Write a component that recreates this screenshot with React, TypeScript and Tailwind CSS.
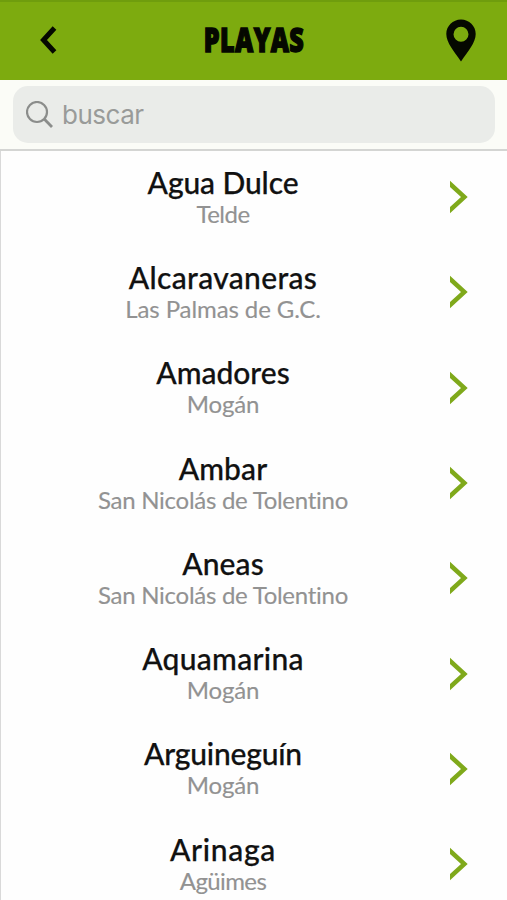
const beaches = [
  { name: "Agua Dulce", town: "Telde", nameSpacing: "tracking-[-0.1px]", townSpacing: "tracking-[-0.5px]" },
  { name: "Alcaravaneras", town: "Las Palmas de G.C.", nameSpacing: "tracking-[0.35px]", townSpacing: "tracking-[-0.1px]" },
  { name: "Amadores", town: "Mogán", nameSpacing: "tracking-[0px]", townSpacing: "tracking-[-0.2px]" },
  { name: "Ambar", town: "San Nicolás de Tolentino", nameSpacing: "tracking-[0.1px]", townSpacing: "tracking-[-0.27px]" },
  { name: "Aneas", town: "San Nicolás de Tolentino", nameSpacing: "tracking-[0.1px]", townSpacing: "tracking-[-0.27px]" },
  { name: "Aquamarina", town: "Mogán", nameSpacing: "tracking-[0.3px]", townSpacing: "tracking-[-0.2px]" },
  { name: "Arguineguín", town: "Mogán", nameSpacing: "tracking-[-0.2px]", townSpacing: "tracking-[-0.2px]" },
  { name: "Arinaga", town: "Agüimes", nameSpacing: "tracking-[0.7px]", townSpacing: "tracking-[-0.6px]" },
];

function Header() {
  return (
    <header className="flex h-20 shrink-0 items-center border-t-2 border-[#6f9d0d] bg-[#7dab0f] pr-[31px] pl-[39px]">
      <button aria-label="Volver" className="w-[30px] pb-0.5">
        <svg width="18" height="30" viewBox="0 0 18 30" fill="none" stroke="#050800" strokeWidth="5">
          <path d="M15.500 3 4.500 15l11 12" />
        </svg>
      </button>
      <h1 className="ml-[70px] flex w-[230px] scale-x-[0.76] justify-center pb-[3px] font-['Open_Sans',sans-serif] text-[33px] leading-none font-extrabold tracking-[0.5px] whitespace-nowrap text-[#050800] [-webkit-text-stroke:1.5px_#050800]">
        PLAYAS
      </h1>
      <button aria-label="Mapa" className="ml-auto pb-[1px]">
        <svg width="30" height="43" viewBox="0 0 30 43" fill="#050800" fillRule="evenodd">
          <path d="M15 .5C6.800.5.3 7 .3 15c0 8.700 8 17.500 14.700 27.500C21.700 32.500 29.700 23.700 29.700 15 29.700 7 23.200.5 15 .5Zm0 7.200a7.500 7.500 0 1 1 0 15 7.500 7.500 0 0 1 0-15Z" />
        </svg>
      </button>
    </header>
  );
}

function Search() {
  return (
    <div className="h-[70.500px] shrink-0 border-b-2 border-[#d4d5d3] bg-[#fbfcf7] pt-[6px] pr-3 pl-[13px]">
      <label className="flex h-[57px] items-center rounded-[15px] bg-[#eaece9] pl-[13px]">
        <svg width="28" height="28" viewBox="0 0 28 28" fill="none" stroke="#8b8d8b" strokeWidth="2.200">
          <circle cx="11" cy="11" r="10" />
          <path d="m18.200 18 7.800 8" strokeWidth="2.800" />
        </svg>
        <input
          placeholder="buscar"
          className="ml-2 w-80 bg-transparent font-[Inter,sans-serif] text-[26px] tracking-[-0.5px] outline-none placeholder:text-[#999b99]"
        />
      </label>
    </div>
  );
}

export default function App() {
  return (
    <div className="flex h-[900px] w-[507px] flex-col overflow-hidden bg-[#fefefe] font-[Lato,sans-serif]">
      <Header />
      <Search />
      <ul className="border-l border-[#d9d9d9]">
        {beaches.map((b) => (
          <li key={b.name} className="flex h-[95.300px] items-center">
            <div className="w-[444px] pb-[5px] text-center whitespace-nowrap">
              <div className={`text-[30px] leading-9 font-medium text-[#111] [-webkit-text-stroke:0.25px_#111] ${b.nameSpacing}`}>
                {b.name}
              </div>
              <div className={`text-[24px] leading-7 text-[#929292] [-webkit-text-stroke:0.15px_#929292] ${b.townSpacing}`}>
                {b.town}
              </div>
            </div>
            <svg className="mb-[2px] ml-1" width="20" height="34" viewBox="0 0 20 34" fill="#7fa91b">
              <path d="M1 .8 18.700 17 1 33.200V27L12 17 1 7Z" />
            </svg>
          </li>
        ))}
      </ul>
    </div>
  );
}
